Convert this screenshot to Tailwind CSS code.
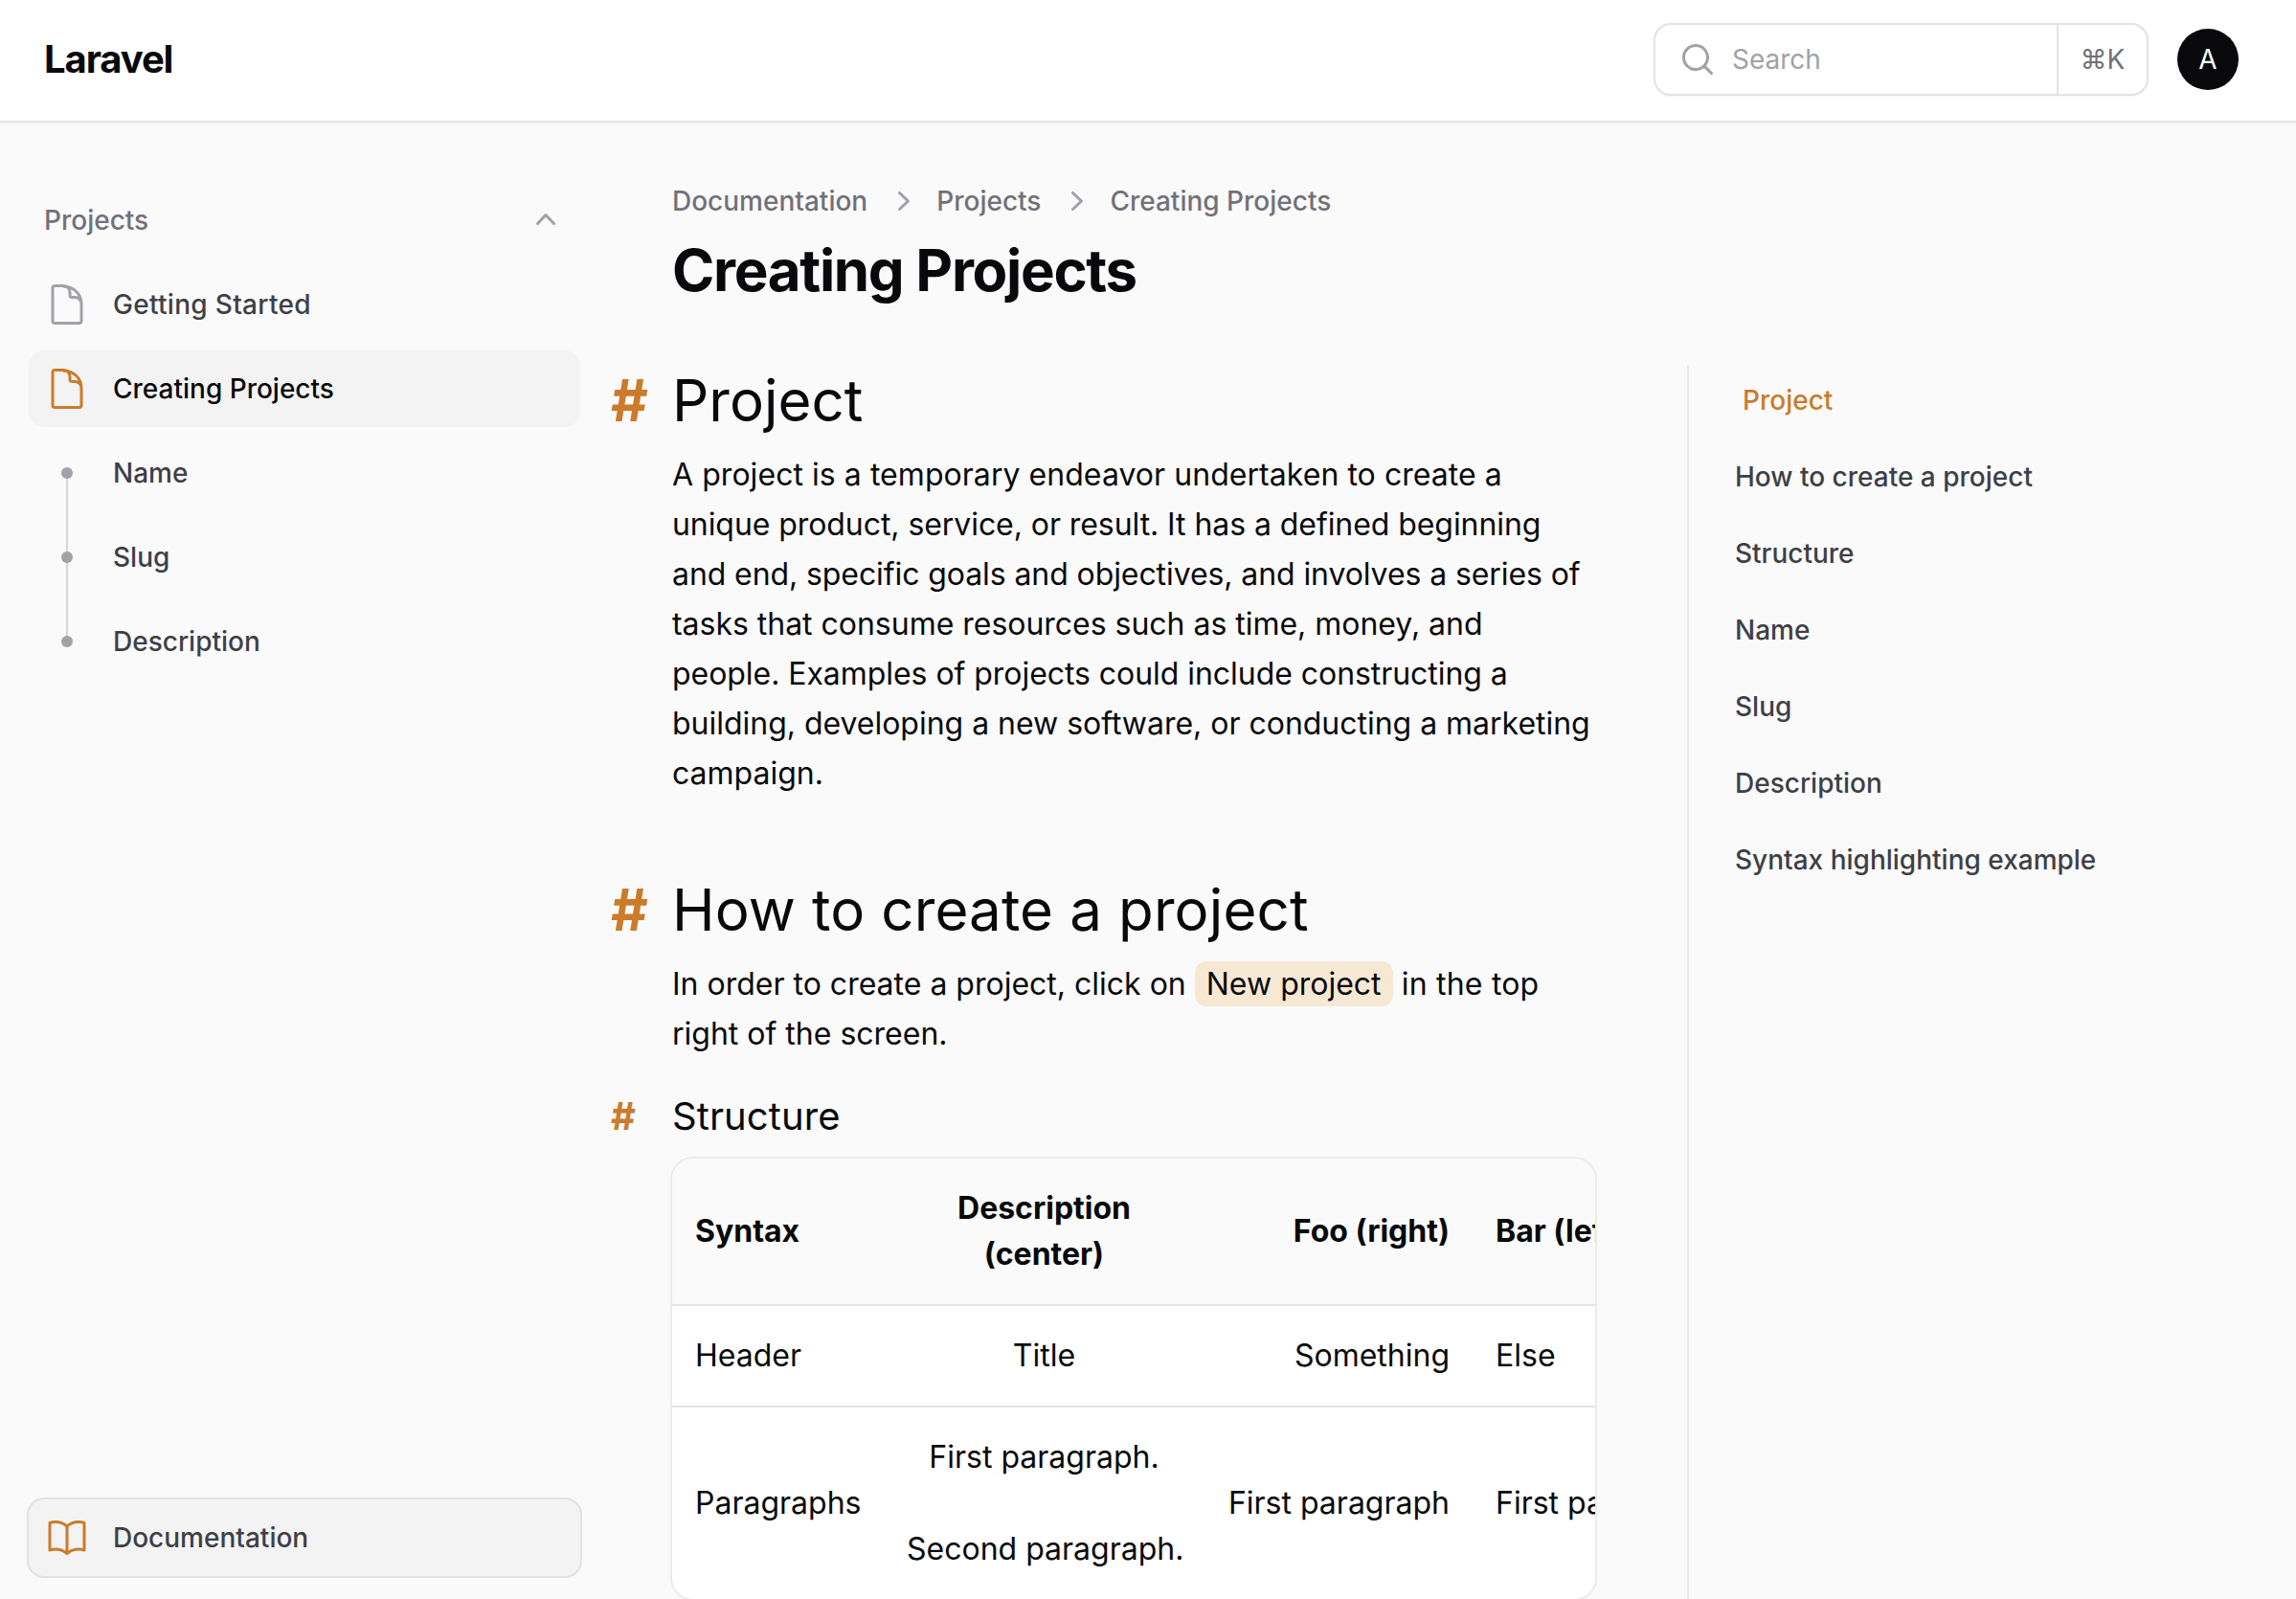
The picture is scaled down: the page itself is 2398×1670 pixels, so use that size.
<!DOCTYPE html>
<html lang="en">
<head>
<meta charset="utf-8">
<title>Creating Projects - Laravel</title>
<script src="https://cdn.jsdelivr.net/npm/@tailwindcss/browser@4"></script>
</head>
<body class="flex h-[1670px] w-[2398px] flex-col overflow-hidden bg-[#fafafa] font-['Inter',sans-serif] text-[28px] leading-10 font-normal text-[#09090b]">
<header class="z-10 flex h-32 shrink-0 items-center justify-between border-b-2 border-[#e5e5e5] bg-white pr-[60px] pl-[46px] shadow-xs">
  <div class="pb-0.5 text-[40px] font-bold tracking-[-1.1px]">Laravel</div>
  <div class="flex items-center gap-[30px] pb-0.5">
    <div class="flex h-[76px] w-[517px] items-center rounded-[18px] border-2 border-[#e3e3e4] bg-white shadow-xs">
      <svg class="ml-6 size-10 text-[#a1a1aa]" viewBox="0 0 20 20" fill="currentColor"><path fill-rule="evenodd" d="M9 3.5a5.5 5.5 0 100 11 5.5 5.5 0 000-11zM2 9a7 7 0 1112.452 4.391l3.328 3.329a.75.75 0 11-1.06 1.06l-3.329-3.328A7 7 0 012 9z"/></svg>
      <span class="ml-4 flex-1 text-[#a1a1aa]">Search</span>
      <span class="flex h-full w-[94px] items-center justify-center border-l-2 border-[#e3e3e4] text-[#71717a]">⌘K</span>
    </div>
    <div class="flex size-16 items-center justify-center rounded-full bg-[#09090b] text-white">A</div>
  </div>
</header>
<div class="flex min-h-0 flex-1">
  <aside class="flex w-[640px] shrink-0 flex-col justify-between pr-[34px] pb-6 pl-[30px] font-medium text-[#3f3f46]">
    <nav class="pt-[62px]">
      <div class="flex h-20 items-center justify-between px-4 text-[#71717a]">
        <span>Projects</span>
        <svg class="mb-0.5 size-10 text-[#a1a1aa]" viewBox="0 0 20 20" fill="currentColor"><path fill-rule="evenodd" d="M14.77 12.79a.75.75 0 01-1.06-.02L10 8.832 6.29 12.77a.75.75 0 11-1.08-1.04l4.25-4.5a.75.75 0 011.08 0l4.25 4.5a.75.75 0 01-.02 1.06z"/></svg>
      </div>
      <ul class="mt-2 flex flex-col gap-2">
        <li class="flex h-20 items-center gap-6 rounded-2xl px-4">
          <svg class="size-12 text-[#a1a1aa]" viewBox="0 0 24 24" fill="none" stroke="currentColor" stroke-width="1.5" stroke-linecap="round" stroke-linejoin="round"><path d="M19.5 14.25v-2.625a3.375 3.375 0 00-3.375-3.375h-1.5A1.125 1.125 0 0113.5 7.125v-1.5a3.375 3.375 0 00-3.375-3.375H5.625c-.621 0-1.125.504-1.125 1.125v17.25c0 .621.504 1.125 1.125 1.125h12.75c.621 0 1.125-.504 1.125-1.125v-9a9 9 0 00-9-9"/></svg>
          <span class="tracking-[0.3px]">Getting Started</span>
        </li>
        <li class="flex h-20 items-center gap-6 rounded-2xl bg-[#f3f3f3] px-4 text-[#09090b]">
          <svg class="size-12 text-[#cb7b2b]" viewBox="0 0 24 24" fill="none" stroke="currentColor" stroke-width="1.5" stroke-linecap="round" stroke-linejoin="round"><path d="M19.5 14.25v-2.625a3.375 3.375 0 00-3.375-3.375h-1.5A1.125 1.125 0 0113.5 7.125v-1.5a3.375 3.375 0 00-3.375-3.375H5.625c-.621 0-1.125.504-1.125 1.125v17.25c0 .621.504 1.125 1.125 1.125h12.75c.621 0 1.125-.504 1.125-1.125v-9a9 9 0 00-9-9"/></svg>
          <span>Creating Projects</span>
        </li>
        <li class="flex h-20 items-center gap-6 px-4">
          <span class="relative flex size-12 items-center justify-center"><i class="absolute top-1/2 left-[23px] h-[88px] w-0.5 bg-[#d4d4d8]"></i><i class="relative size-3 rounded-full bg-[#a1a1aa]"></i></span>
          <span>Name</span>
        </li>
        <li class="flex h-20 items-center gap-6 px-4">
          <span class="relative flex size-12 items-center justify-center"><i class="absolute top-1/2 left-[23px] h-[88px] w-0.5 bg-[#d4d4d8]"></i><i class="relative size-3 rounded-full bg-[#a1a1aa]"></i></span>
          <span>Slug</span>
        </li>
        <li class="flex h-20 items-center gap-6 px-4">
          <span class="relative flex size-12 items-center justify-center"><i class="relative size-3 rounded-full bg-[#a1a1aa]"></i></span>
          <span>Description</span>
        </li>
      </ul>
    </nav>
    <div class="flex h-20 items-center gap-6 rounded-2xl bg-[#f3f3f3] px-4 ring-2 ring-[#e2e2e2]">
      <svg class="size-12 text-[#cb7b2b]" viewBox="0 0 24 24" fill="none" stroke="currentColor" stroke-width="1.5" stroke-linecap="round" stroke-linejoin="round"><path d="M12 6.042A8.967 8.967 0 006 3.75c-1.052 0-2.062.18-3 .512v14.25A8.987 8.987 0 016 18c2.305 0 4.408.867 6 2.292m0-14.25a8.966 8.966 0 016-2.292c1.052 0 2.062.18 3 .512v14.25A8.987 8.987 0 0018 18a8.967 8.967 0 00-6 2.292m0-14.25v14.25"/></svg>
      <span>Documentation</span>
    </div>
  </aside>
  <div class="flex min-w-0 flex-1 flex-col pt-[62px] pl-[62px]">
    <nav class="flex h-10 items-center gap-6 font-medium text-[#71717a]">
      <span>Documentation</span>
      <svg class="-mr-2.5 -ml-1.5 size-10 text-[#a1a1aa]" viewBox="0 0 20 20" fill="currentColor"><path fill-rule="evenodd" d="M7.21 14.77a.75.75 0 01.02-1.06L11.168 10 7.23 6.29a.75.75 0 111.04-1.08l4.5 4.25a.75.75 0 010 1.08l-4.5 4.25a.75.75 0 01-1.06-.02z"/></svg>
      <span>Projects</span>
      <svg class="-mr-2.5 -ml-1.5 size-10 text-[#a1a1aa]" viewBox="0 0 20 20" fill="currentColor"><path fill-rule="evenodd" d="M7.21 14.77a.75.75 0 01.02-1.06L11.168 10 7.23 6.29a.75.75 0 111.04-1.08l4.5 4.25a.75.75 0 010 1.08l-4.5 4.25a.75.75 0 01-1.06-.02z"/></svg>
      <span>Creating Projects</span>
    </nav>
    <h1 class="mt-4 text-[60px] leading-[72px] font-bold tracking-[-1.32px]">Creating Projects</h1>
    <div class="mt-16 flex min-h-0 flex-1">
      <article class="w-[966px] shrink-0 text-[32px] leading-[52px]">
        <h2 class="-ml-16 flex text-[60px] leading-[72px]"><span class="w-16 font-bold text-[#cb7b2b]">#</span>Project</h2>
        <p class="mt-4 whitespace-nowrap"><span class="tracking-[0.05px]">A project is a temporary endeavor undertaken to create a</span><br><span class="tracking-[-0.07px]">unique product, service, or result. It has a defined beginning</span><br><span class="tracking-[-0.09px]">and end, specific goals and objectives, and involves a series of</span><br><span class="tracking-[-0.02px]">tasks that consume resources such as time, money, and</span><br><span class="tracking-[-0.05px]">people. Examples of projects could include constructing a</span><br><span class="tracking-[-0.02px]">building, developing a new software, or conducting a marketing</span><br>campaign.</p>
        <h2 class="mt-20 -ml-16 flex text-[60px] leading-[72px]"><span class="w-16 font-bold text-[#cb7b2b]">#</span><span class="tracking-[0.13px]">How to create a project</span></h2>
        <p class="mt-4">In order to create a project, click on <mark class="rounded-xl bg-[#f7e8d4] px-3 py-1 text-inherit">New project</mark><span class="tracking-[0.2px]"> in the top</span><br>right of the screen.</p>
        <h3 class="mt-[30px] -ml-16 flex text-[40px] leading-[60px]"><span class="w-16 font-bold text-[#cb7b2b]">#</span><span class="tracking-[0.1px]">Structure</span></h3>
        <div class="mt-3 -ml-0.5 w-[968px] overflow-hidden rounded-3xl border-2 border-[#ebebeb] bg-white">
          <table class="w-[1200px] table-fixed leading-[48px]">
            <colgroup><col class="w-[221px]"><col class="w-[335px]"><col class="w-[280px]"><col></colgroup>
            <thead class="border-b-2 border-[#e4e4e5] bg-[#fafafa] font-bold">
              <tr><th class="p-6 py-7 text-left">Syntax</th><th class="p-6 py-7">Description<br>(center)</th><th class="p-6 py-7 text-right">Foo (right)</th><th class="p-6 py-7 text-left">Bar (left)</th></tr>
            </thead>
            <tbody>
              <tr class="border-b-2 border-[#e4e4e5]"><td class="p-6 py-7">Header</td><td class="p-6 py-7 text-center">Title</td><td class="p-6 py-7 text-right">Something</td><td class="p-6 py-7">Else</td></tr>
              <tr><td class="p-6 py-7">Paragraphs</td><td class="p-6 py-7 text-center whitespace-nowrap">First paragraph.<br><br>Second paragraph.</td><td class="p-6 py-7 text-right whitespace-nowrap">First paragraph</td><td class="p-6 py-7">First paragraph</td></tr>
            </tbody>
          </table>
        </div>
      </article>
      <aside class="ml-[94px] flex flex-1 flex-col gap-10 border-l-2 border-[#e9e9e9] pt-4 pl-12 font-medium text-[#3f3f46]">
        <a class="pl-2 text-[#cb7b2b]">Project</a>
        <a>How to create a project</a>
        <a>Structure</a>
        <a>Name</a>
        <a>Slug</a>
        <a>Description</a>
        <a>Syntax highlighting example</a>
      </aside>
    </div>
  </div>
</div>
</body>
</html>
